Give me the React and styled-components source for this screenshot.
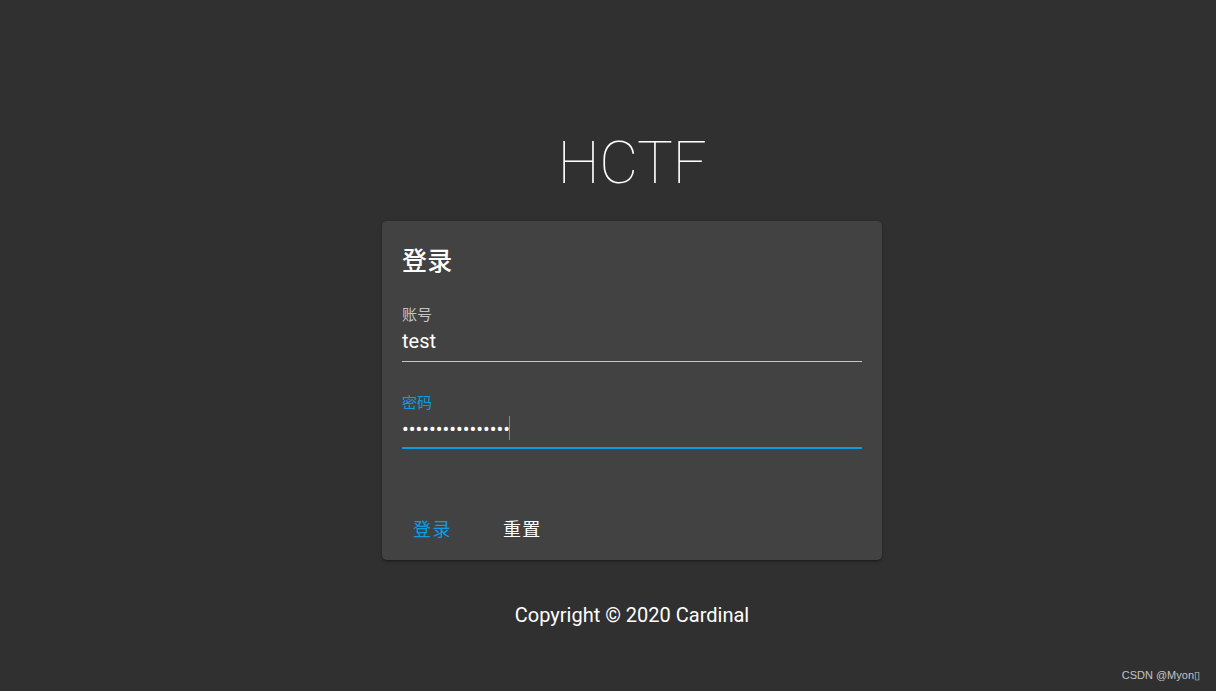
import React from 'react'
import styled, { createGlobalStyle } from 'styled-components'

const GlobalStyle = createGlobalStyle`
  html, body {
    margin: 0;
    padding: 0;
    background: #303030;
  }
  body {
    font-family: Roboto, "Noto Sans CJK SC", sans-serif;
    color: #fff;
  }
`

const App = () => {
  return (
    <>
      <GlobalStyle />
      <Page>
        <Brand>HCTF</Brand>
        <Card>
          <CardTitle>登录</CardTitle>
          <Form>
            <Field>
              <Label>账号</Label>
              <Input defaultValue="test" />
            </Field>
            <Field $active>
              <Label $active>密码</Label>
              <InputRow>
                <Input $active type="password" defaultValue="abcdefghijklmnop" />
                <Caret />
              </InputRow>
            </Field>
          </Form>
          <Actions>
            <TextButton $primary>登录</TextButton>
            <TextButton>重置</TextButton>
          </Actions>
        </Card>
        <Footer>Copyright © 2020 Cardinal</Footer>
      </Page>
      <Watermark>CSDN @Myon▯</Watermark>
    </>
  )
}

const Page = styled.main`
  width: 100%;
  min-height: 691px;
  display: flex;
  flex-direction: column;
  align-items: center;
  padding: 133px 0 0 48px;
  box-sizing: border-box;
`

const Brand = styled.h1`
  margin: 0;
  font-family: Roboto, sans-serif;
  font-size: 60px;
  font-weight: 100;
  line-height: 60px;
  letter-spacing: -0.005em;
  color: #fff;
`

const Card = styled.section`
  margin-top: 28px;
  width: 500px;
  background: #424242;
  border-radius: 5px;
  box-shadow: 0 3px 1px -2px rgba(0, 0, 0, 0.2), 0 2px 2px 0 rgba(0, 0, 0, 0.14), 0 1px 5px 0 rgba(0, 0, 0, 0.12);
  display: flex;
  flex-direction: column;
`

const CardTitle = styled.h2`
  margin: 0;
  padding: 20px 20px 0;
  font-family: Roboto, "Noto Sans CJK SC", sans-serif;
  font-size: 25px;
  font-weight: 500;
  line-height: 41px;
  letter-spacing: 0.0125em;
`

const Form = styled.div`
  padding: 23px 20px 0;
  display: flex;
  flex-direction: column;
  gap: 31px;
`

const Field = styled.div`
  display: flex;
  flex-direction: column;
  border-bottom: ${p => (p.$active ? '2px solid #0d9de3' : '1px solid rgba(255, 255, 255, 0.7)')};
`

const Label = styled.label`
  font-family: Roboto, "Noto Sans CJK SC", sans-serif;
  font-size: 15px;
  line-height: 20px;
  color: ${p => (p.$active ? '#0d9de3' : 'rgba(255, 255, 255, 0.7)')};
`

const InputRow = styled.div`
  position: relative;
  display: flex;
  align-items: center;
`

const Input = styled.input`
  width: 100%;
  height: 32px;
  padding: 0 0 ${p => (p.$active ? '2px' : '4px')};
  border: none;
  outline: none;
  background: transparent;
  color: #fff;
  font-family: Roboto, sans-serif;
  font-size: 20px;
`

const Caret = styled.span`
  position: absolute;
  left: 107px;
  top: 3px;
  width: 1px;
  height: 24px;
  background: #8a8a8a;
`

const Actions = styled.div`
  padding: 56px 10px 10px 11px;
  display: flex;
  align-items: center;
  gap: 11px;
`

const TextButton = styled.button`
  height: 45px;
  padding: 0 20px;
  border: none;
  background: transparent;
  border-radius: 5px;
  font-family: Roboto, "Noto Sans CJK SC", sans-serif;
  font-size: 18px;
  font-weight: 400;
  letter-spacing: 0.08em;
  color: ${p => (p.$primary ? '#0d9de3' : '#fff')};
  cursor: pointer;
`

const Footer = styled.footer`
  margin-top: 43px;
  font-family: Roboto, sans-serif;
  font-size: 20px;
  font-weight: 400;
  line-height: 24px;
  color: #fff;
`

const Watermark = styled.div`
  position: absolute;
  right: 16px;
  bottom: 9px;
  font-family: "Liberation Sans", Arial, sans-serif;
  font-size: 11px;
  color: rgba(255, 255, 255, 0.72);
`

export default App
